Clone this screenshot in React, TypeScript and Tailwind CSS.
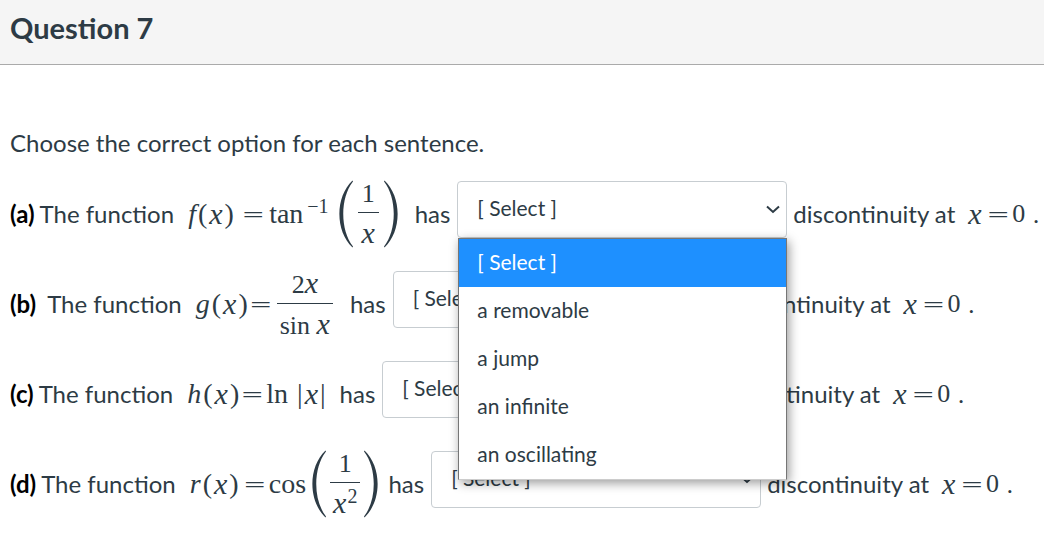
import type { ReactNode } from "react";

const options = [
  "[ Select ]",
  "a removable",
  "a jump",
  "an infinite",
  "an oscillating",
];

function Chevron() {
  return (
    <svg
      className="pointer-events-none absolute right-[7px] top-[22px] h-3 w-[14px]"
      viewBox="0 0 14 12"
      fill="none"
      stroke="#2d3b45"
      strokeWidth="2"
      aria-hidden="true"
    >
      <path d="M1 3.5L7 9L13 3.5" />
    </svg>
  );
}

function Equals() {
  return (
    <span className="flex w-5 justify-center font-['DejaVu_Sans',sans-serif] text-[28px] font-extralight leading-none">
      =
    </span>
  );
}

function Func({ name }: { name: string }) {
  return (
    <span className="flex w-14 items-center gap-[2px] pl-px text-[28px] leading-9">
      <i>{name}</i>
      <span>(</span>
      <i className="text-[30px]">x</i>
      <span>)</span>
    </span>
  );
}

function Fraction({ top, bottom }: { top: ReactNode; bottom: ReactNode }) {
  return (
    <span className="flex flex-col text-center leading-9">
      <span className="border-b border-[#2d3b45] px-1">{top}</span>
      <span className="px-[3px] pt-[2px]">{bottom}</span>
    </span>
  );
}

function Paren({ right = false }: { right?: boolean }) {
  return (
    <svg
      className="h-[70px] w-[14px] shrink-0"
      viewBox="0 0 14 70"
      fill="#2d3b45"
      aria-hidden="true"
    >
      {right ? (
        <path d="M0.5 1.5C18 18 18 52 0.5 68.5L0 67.5C13 51 13 19 0 2.5Z" />
      ) : (
        <path d="M13.5 1.5C-4 18 -4 52 13.5 68.5L14 67.5C1 51 1 19 14 2.5Z" />
      )}
    </svg>
  );
}

function Answer({ label, open = false }: { label: string; open?: boolean }) {
  return (
    <span className="relative mb-[10px] ml-[7px] w-[330px] shrink-0">
      <select
        aria-label={label}
        className="block h-[57px] w-full appearance-none rounded border border-[#c7cdd1] bg-white pb-[3px] pl-[19px] pr-8 text-[21px]"
      >
        {options.map((option) => (
          <option key={option}>{option}</option>
        ))}
      </select>
      <Chevron />
      {open && (
        <ul
          role="listbox"
          aria-label={label}
          className="absolute left-px right-0 top-full z-10 border border-[#767676] border-b-[#cccccc] bg-white text-[21px] shadow-[2px_3px_10px_rgba(0,0,0,0.4)]"
        >
          {options.map((option, i) => (
            <li
              key={option}
              role="option"
              aria-selected={i === 0}
              className="flex h-12 items-center px-[18px] pb-[2px] aria-selected:bg-[#1e90ff] aria-selected:text-white"
            >
              {option}
            </li>
          ))}
        </ul>
      )}
    </span>
  );
}

type SentenceProps = {
  letter: string;
  name: string;
  spaced?: boolean;
  open?: boolean;
  children: ReactNode;
};

function Sentence({ letter, name, spaced, open, children }: SentenceProps) {
  return (
    <div className="flex h-[90px] items-center whitespace-nowrap pb-[2px]">
      <b className="text-black">({letter})</b>
      <span className={spaced ? "ml-[11px]" : "ml-[5px]"}>The function</span>
      <span className="ml-[13px] flex items-center font-['Liberation_Serif',serif] text-[26px]">
        <Func name={name} />
        <Equals />
        {children}
      </span>
      <span>has</span>
      <Answer label={`Sentence ${letter}`} open={open} />
      <span className="ml-[6px]">discontinuity at</span>
      <span className="ml-[13px] flex items-center font-['Liberation_Serif',serif] text-[26px]">
        <i className="w-5 text-[30px] leading-9">x</i>
        <Equals />
        <span className="ml-1">0</span>
      </span>
      <span className="ml-2">.</span>
    </div>
  );
}

export default function App() {
  return (
    <div className="min-h-screen overflow-hidden bg-white font-['Lato',sans-serif] text-2xl text-[#2d3b45]">
      <header className="flex h-[65px] items-center border-b border-[#aaaaaa] bg-[#f5f5f5] px-[10px] pb-2">
        <h1 className="text-[29px] font-bold">Question 7</h1>
      </header>

      <main className="px-[10px] pt-[62px]">
        <p className="mb-[11px] leading-8">
          Choose the correct option for each sentence.
        </p>

        <Sentence letter="a" name="f" open>
          <span className="ml-[6px] text-[28px]">
            tan<sup className="ml-1 text-xl">−1</sup>
          </span>
          <span className="ml-[10px] mr-[17px] flex items-center gap-1">
            <Paren />
            <span className="px-px">
              <Fraction top="1" bottom={<i className="text-[30px]">x</i>} />
            </span>
            <Paren right />
          </span>
        </Sentence>

        <Sentence letter="b" name="g" spaced>
          <span className="ml-[6px] mr-[17px]">
            <Fraction
              top={
                <>
                  2<i className="text-[30px]">x</i>
                </>
              }
              bottom={
                <>
                  sin <i className="text-[30px]">x</i>
                </>
              }
            />
          </span>
        </Sentence>

        <Sentence letter="c" name="h">
          <span className="ml-1 mr-[14px] flex items-center gap-[5px] text-[28px] leading-9">
            ln
            <span className="ml-1 flex items-center gap-[2px]">
              <span>|</span>
              <i className="text-[30px]">x</i>
              <span>|</span>
            </span>
          </span>
        </Sentence>

        <Sentence letter="d" name="r">
          <span className="ml-1 text-[28px]">cos</span>
          <span className="ml-[6px] mr-[10px] flex items-center gap-1">
            <Paren />
            <Fraction
              top="1"
              bottom={
                <>
                  <i className="text-[30px]">x</i>
                  <sup className="ml-px text-xl">2</sup>
                </>
              }
            />
            <Paren right />
          </span>
        </Sentence>
      </main>
    </div>
  );
}
